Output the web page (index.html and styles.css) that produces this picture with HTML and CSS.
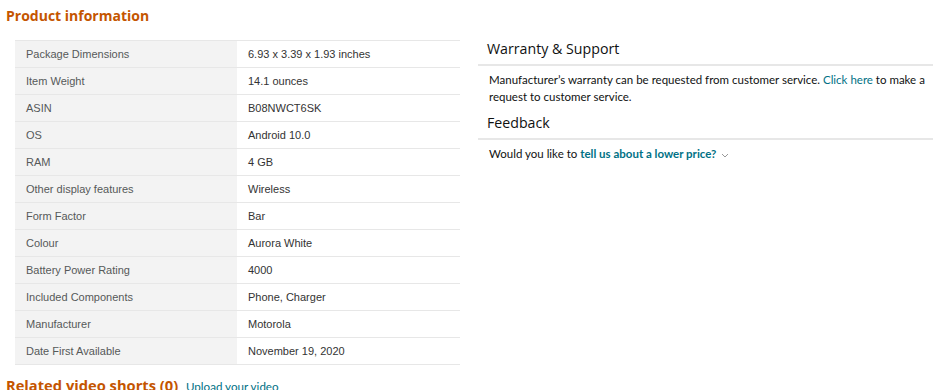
FILE: index.html
```html
<!DOCTYPE html>
<html lang="en">
<head>
    <meta charset="UTF-8">
    <meta name="viewport" content="width=device-width, initial-scale=1.0">
    <title>Product information</title>
    <link rel="stylesheet" href="styles.css">
</head>
<body>
    <h2 class="section-title">Product information</h2>

    <div class="product-info">
        <table class="details">
            <tr><th>Package Dimensions</th><td>6.93 x 3.39 x 1.93 inches</td></tr>
            <tr><th>Item Weight</th><td>14.1 ounces</td></tr>
            <tr><th>ASIN</th><td>B08NWCT6SK</td></tr>
            <tr><th>OS</th><td>Android 10.0</td></tr>
            <tr><th>RAM</th><td>4 GB</td></tr>
            <tr><th>Other display features</th><td>Wireless</td></tr>
            <tr><th>Form Factor</th><td>Bar</td></tr>
            <tr><th>Colour</th><td>Aurora White</td></tr>
            <tr><th>Battery Power Rating</th><td>4000</td></tr>
            <tr><th>Included Components</th><td>Phone, Charger</td></tr>
            <tr><th>Manufacturer</th><td>Motorola</td></tr>
            <tr><th>Date First Available</th><td>November 19, 2020</td></tr>
        </table>

        <div class="side">
            <h3 class="side-title">Warranty &amp; Support</h3>
            <p class="side-text">Manufacturer’s warranty can be requested from customer service. <a href="#">Click here</a> to make a request to customer service.</p>

            <h3 class="side-title">Feedback</h3>
            <p class="side-text">Would you like to <a href="#" class="bold">tell us about a lower price?</a>
                <svg class="caret" width="8" height="5" viewBox="0 0 8 5"><path d="M1 1l3 3 3-3" fill="none" stroke="#999" stroke-width="1"/></svg>
            </p>
        </div>
    </div>

    <h2 class="section-title videos">Related video shorts (0) <a href="#">Upload your video</a></h2>
</body>
</html>
```

FILE: styles.css
```css
body { margin: 0; padding: 6px 6px 0; font-family: "Liberation Sans", Arial, sans-serif; color: #0f1111; background: #fff; }
a { color: #007185; text-decoration: none; }

.section-title { margin: 0; font-family: "Open Sans", sans-serif; font-size: 14px; font-weight: 700; color: #c45500; line-height: 19px; }
.section-title a { font-family: Lato, sans-serif; font-size: 11.6px; font-weight: 400; margin-left: 4px; }
.videos { margin-top: 11px; font-size: 14.7px; }

.product-info { display: flex; align-items: flex-start; margin-top: 15px; }

.details { width: 445px; margin-left: 9px; border-collapse: collapse; font-size: 11px; border-top: 1px solid #e7e7e7; }
.details th, .details td { height: 26px; padding: 0 11px; text-align: left; font-weight: 400; border-bottom: 1px solid #e7e7e7; }
.details th { width: 200px; background: #f3f3f3; color: #565959; }
.details td { color: #333; }

.side { margin-left: 18px; width: 455px; margin-top: -1px; }
.side-title { margin: 0; padding: 0 0 5px 9px; font-family: "Open Sans", sans-serif; font-size: 14.2px; font-weight: 400; line-height: 20px; color: #0f1111; border-bottom: 2px solid #e7e7e7; }
.side-text { margin: 0; padding: 5px 2px 8px 11px; font-family: Lato, sans-serif; font-size: 11.5px; line-height: 17px; color: #0f1111; }
.bold { font-weight: 700; }
.caret { margin-left: 2px; vertical-align: middle; }
```
